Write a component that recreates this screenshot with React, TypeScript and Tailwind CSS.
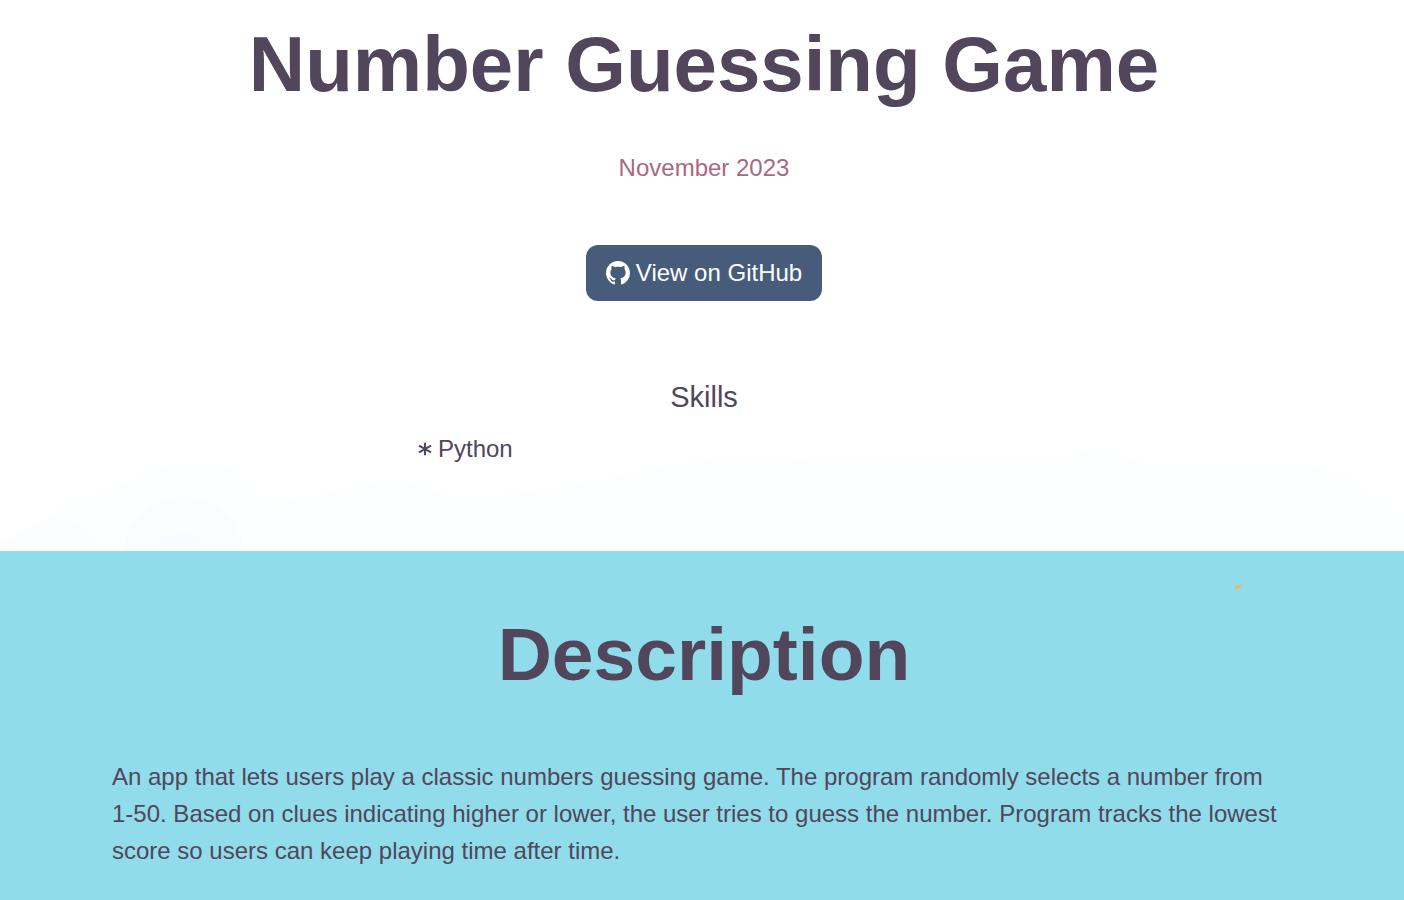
import { BsGithub } from "react-icons/bs";

function AsteriskMark() {
  return (
    <svg viewBox="0 0 14 14" className="size-3.5" fill="none" stroke="currentColor" strokeWidth="2.1" aria-hidden="true">
      <path d="M7 .7v12.6M1 3.7l12 6.6M1 10.3l12-6.6" />
    </svg>
  );
}

function Haze() {
  return (
    <svg viewBox="0 0 1404 111" preserveAspectRatio="none" className="absolute inset-x-0 bottom-0 h-[111px] w-full" aria-hidden="true">
      <path
        d="M0 111V102C30 88 55 68 84 58C108 50 130 42 152 31C178 23 205 20 226 26C243 32 252 51 265 63C300 59 330 50 370 43C398 39 424 43 440 53C490 59 560 49 625 34C675 24 715 16 755 16C788 17 810 22 850 21L1050 21C1073 13 1090 8 1104 11C1125 16 1140 23 1165 25L1300 24C1322 29 1347 31 1366 48C1384 62 1399 69 1404 83V111Z"
        fill="#fcfeff"
      />
      <path d="M0 105C20 98 38 80 59 77C79 81 94 96 112 111H0Z" fill="#fbfdff" />
      <path d="M124 111C125 83 149 58 184 58C219 58 242 84 243 111Z" fill="#f9fdff" />
      <path d="M144 111C161 100 172 92 184 92C195 93 202 102 203 111Z" fill="#f8fcff" />
    </svg>
  );
}

export default function App() {
  return (
    <div className="min-h-screen bg-[#90dceb] font-['Liberation_Sans',Arial,sans-serif] text-2xl text-[#51465b]">
      <header className="relative bg-white pt-4 pb-[84px] pl-1">
        <Haze />
        <div className="relative flex flex-col items-center">
          <h1 className="text-center text-[78px] leading-24 font-bold">Number Guessing Game</h1>
          <p className="mt-10 leading-8 text-[#a9687f]">November 2023</p>
          <a href="#github" className="mt-[61px] flex h-14 items-center gap-1.5 rounded-xl bg-[#475c7b] px-5 text-white">
            <BsGithub className="size-6" />
            View on GitHub
          </a>
          <h2 className="mt-19 text-[29px] leading-10">Skills</h2>
          <ul className="mt-3.5 w-full max-w-[572px]">
            <li className="flex items-center gap-1.5 leading-9">
              <AsteriskMark />
              Python
            </li>
          </ul>
        </div>
      </header>
      <main className="relative pt-[55px] pr-[108px] pl-28">
        <svg viewBox="0 0 10 6" className="absolute top-[33px] right-[160px] h-1.5 w-2.5" aria-hidden="true">
          <path d="M1 2Q2 1 4 1L10 .5L6 3.5L2 5.5Q.5 5.5 1 2Z" fill="#e9b96e" />
        </svg>
        <h2 className="text-center text-[75px] leading-24 font-bold">Description</h2>
        <p className="mt-14 pr-3 leading-[37px]">
          An app that lets users play a classic numbers guessing game. The program randomly selects a number from 1-50. Based on clues indicating higher or lower, the user tries to guess the number. Program tracks the lowest
          score so users can keep playing time after time.
        </p>
      </main>
    </div>
  );
}
